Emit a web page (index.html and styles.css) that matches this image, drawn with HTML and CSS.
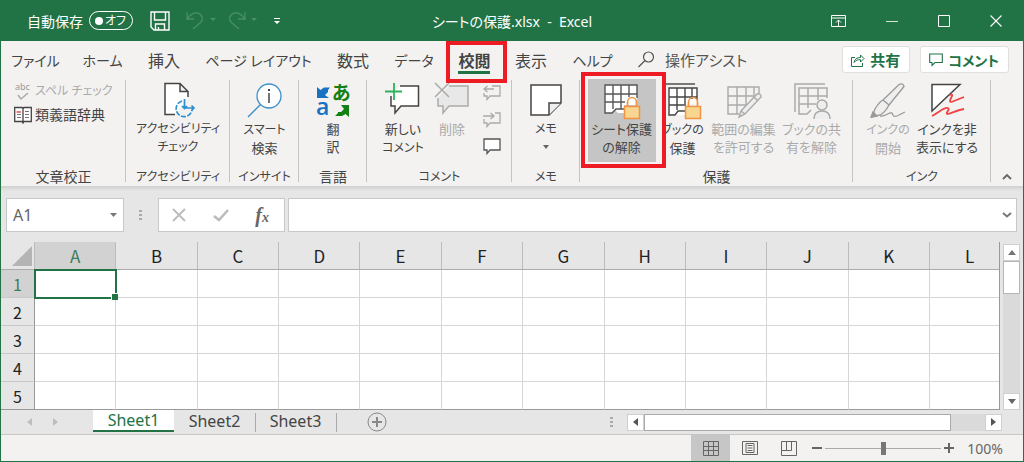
FILE: index.html
```html
<!DOCTYPE html>
<html lang="ja">
<head>
<meta charset="utf-8">
<meta name="viewport" content="width=device-width, initial-scale=1">
<title>シートの保護.xlsx - Excel</title>
<link rel="stylesheet" href="styles.css">
</head>
<body>
<div class="app">
  <header class="titlebar">
    <div class="quick">
      <label for="autosave" class="autosave-label">自動保存</label>
      <span class="switch"><input type="checkbox" id="autosave"><span>オフ</span></span>
      <button class="icon-btn save" aria-label="上書き保存"><svg width="20" height="20" viewBox="0 0 20 20" fill="none" stroke="#fff" stroke-width="1.4"><path d="M1 1h18v18H4l-3-3zM4.500 1v8h11V1M5.500 19v-6h9v6M8.500 19v-3"/></svg></button>
      <button class="icon-btn undo" aria-label="元に戻す" disabled><svg width="29" height="20" viewBox="0 0 29 20" fill="none" stroke="#4a8e6a" stroke-width="1.300"><path d="M1 1v7h7M1.500 7.500C6 1 12 .5 15 4c3 4 1 6-1 8l-7 6"/><path d="M24 7h6l-3 3z" fill="#4a8e6a" stroke="none"/></svg></button>
      <button class="icon-btn redo" aria-label="やり直し" disabled><svg width="29" height="20" viewBox="0 0 29 20" fill="none" stroke="#4a8e6a" stroke-width="1.300"><path d="M17 1v7h-7M16.500 7.500C12 1 6 .5 3 4 0 8 2 10 4 12l7 6"/><path d="M23 7h6l-3 3z" fill="#4a8e6a" stroke="none"/></svg></button>
      <button class="icon-btn custom" aria-label="カスタマイズ"><svg width="6" height="8" viewBox="0 0 6 8" fill="#fff"><path d="M0 1h6v1H0zM0 4h6L3 7z"/></svg></button>
    </div>
    <h1 class="doc-title">シートの保護.xlsx&nbsp; -&nbsp; Excel</h1>
    <div class="window-btns">
      <button class="icon-btn" aria-label="リボンの表示オプション"><svg width="15" height="12" viewBox="0 0 15 12" fill="none" stroke="#fff"><path d="M.5.5h14v11H.5zM.5 3h14M7.500 11V5M5 7.500 7.500 5 10 7.500"/></svg></button>
      <button class="icon-btn" aria-label="最小化"><svg width="12" height="12" viewBox="0 0 12 12" stroke="#d5e5dc"><path d="M0 6.500h12"/></svg></button>
      <button class="icon-btn" aria-label="最大化"><svg width="12" height="12" viewBox="0 0 12 12" fill="none" stroke="#fff"><path d="M.5.5h11v11H.5z"/></svg></button>
      <button class="icon-btn" aria-label="閉じる"><svg width="12" height="12" viewBox="0 0 12 12" stroke="#fff" stroke-width="1.100"><path d="M.5.5l11 11M11.500.5l-11 11"/></svg></button>
    </div>
  </header>

  <div class="tabrow">
    <nav class="tabs">
      <button class="kana">ファイル</button><button class="kana">ホーム</button><button>挿入</button><button class="kana">ページ レイアウト</button><button>数式</button><button class="kana">データ</button><button class="active">校閲<span class="callout tab-callout"></span></button><button>表示</button><button class="kana">ヘルプ</button>
    </nav>
    <button class="assist"><svg width="17" height="17" viewBox="0 0 17 17" fill="none" stroke="#555" stroke-width="1.200"><circle cx="10.500" cy="6" r="5"/><path d="M7 9.500.5 16"/></svg>操作アシスト</button>
    <div class="share">
      <button><svg width="14" height="14" viewBox="0 0 14 14" fill="none" stroke="#217346"><path d="M4 4.500H.5v9h11V10M3 9.500c.5-3.500 3-5 6.500-5V2L13 5.500 9.500 9V6.700C7 6.500 5 7 3 9.500z"/></svg>共有</button>
      <button class="kana"><svg width="14" height="14" viewBox="0 0 14 14" fill="none" stroke="#217346" stroke-width="1.100"><path d="M.7 1h12.600v8.500H6L3 12.500v-3H.7z"/></svg>コメント</button>
    </div>
  </div>

  <div class="ribbon">
    <section class="group proof">
      <div class="tools list">
        <button class="row kana" disabled><svg width="18" height="19" viewBox="0 0 18 19"><text x="1" y="8" font-size="9" fill="#999">abc</text><path d="M4 13l3 4 7-6" fill="none" stroke="#aaa" stroke-width="1.500"/></svg>スペル チェック</button>
        <button class="row"><svg width="18" height="18" viewBox="0 0 18 18" fill="#fff" stroke="#444" stroke-width="1.300"><path d="M.7 1.500H8l1 1 1-1h7.300v14H10l-1 1.500-1-1.500H.7zM9 2v14"/><path d="M11 5.500h4M11 8.500h4M11 11.500h4M3 8.500h4M3 11.500h4" stroke="#777" stroke-width="1"/><path d="M2.500 6h4.500" stroke="#e33"/></svg>類義語辞典</button>
      </div>
      <h2>文章校正</h2>
    </section>
    <section class="group access">
      <div class="tools"><button class="tool kana"><svg width="36" height="36" viewBox="0 0 36 36" fill="none" stroke="#444" stroke-width="1.500"><path d="M15 31.500H5v-31h15l8 8V14M20 .5v8h8" fill="#fff"/><g stroke="#2e8fd0" stroke-width="1.700"><path d="M22 18a8 8 0 1 0 10 9" stroke-dasharray="5 1.500"/><path d="M24.500 16v9H34M31.500 22.500 34 25l-2.500 2.500M22 23l2.500 2.500L27 23"/></g></svg><span>アクセシビリティ<br>チェック</span></button></div>
      <h2 class="kana">アクセシビリティ</h2>
    </section>
    <section class="group insight">
      <div class="tools"><button class="tool"><svg width="36" height="36" viewBox="0 0 36 36" fill="none"><circle cx="22" cy="13" r="12" fill="#fff" stroke="#3d8fc9" stroke-width="1.300"/><path d="M13.500 21.500 1 34" stroke="#3d8fc9" stroke-width="1.500"/><path d="M22 10v10" stroke="#444" stroke-width="1.500"/><path d="M22 6v2" stroke="#444" stroke-width="2"/></svg><span><span class="kana">スマート</span><br>検索</span></button></div>
      <h2 class="kana">インサイト</h2>
    </section>
    <section class="group lang">
      <div class="tools"><button class="tool"><svg width="36" height="36" viewBox="0 0 36 36"><path d="M2 4l3.500 3L9 4.500h6L13 7v2l-3 3 4 3H2z" fill="#1971c2"/><text x="1" y="32" font-size="23" font-weight="600" fill="#1971c2" class="latin">a</text><text x="17" y="17" font-size="19" font-weight="700" fill="#128012">あ</text><path d="M34 22v12l-3.500-3-3.500 2h-7l3-3v-1h3l3-3-3-4z" fill="#128012"/></svg><span>翻<br>訳</span></button></div>
      <h2>言語</h2>
    </section>
    <section class="group comments">
      <div class="tools">
        <button class="tool"><svg width="36" height="36" viewBox="0 0 36 36" fill="none"><path d="M15 3h18.500v20H16l-6 7v-7H6V13" fill="#fff" stroke="#444" stroke-width="1.500"/><path d="M9 0v17M0 8.500h17" stroke="#2eb35c" stroke-width="1.800"/></svg><span>新しい<br><span class="kana">コメント</span></span></button>
        <button class="tool" disabled><svg width="36" height="36" viewBox="0 0 36 36" fill="none" stroke="#aaa" stroke-width="1.500"><path d="M15 3h19v20H15l-6 7v-7H4V15" fill="#e8e8e8"/><path d="M1 0l14 14M15 0 1 14"/></svg><span>削除</span></button>
        <div class="mini">
          <button aria-label="前のコメント" disabled><svg width="18" height="17" viewBox="0 0 18 17" fill="none" stroke="#aaa" stroke-width="1.300"><path d="M9 2h8v10H7l-3 3.500V12H1V9M1 5h10M4.500 2 1 5l3.500 3"/></svg></button>
          <button aria-label="次のコメント" disabled><svg width="18" height="17" viewBox="0 0 18 17" fill="none" stroke="#aaa" stroke-width="1.300"><path d="M12 2h5v10H7l-3 3.500V12H1V8M0 5h11M7.500 2 11 5 7.500 8"/></svg></button>
          <button aria-label="コメントの表示"><svg width="18" height="17" viewBox="0 0 18 17" fill="#fff" stroke="#555" stroke-width="1.300"><path d="M1 1h16v11H7l-3 3.500V12H1z"/></svg></button>
        </div>
      </div>
      <h2 class="kana">コメント</h2>
    </section>
    <section class="group memo">
      <div class="tools"><button class="tool kana"><svg width="36" height="36" viewBox="0 0 36 36" fill="#fff" stroke="#444" stroke-width="1.500"><path d="M3 2h30v18L21 32H3z"/><path d="M33 20H21v12" fill="#eee"/></svg><span>メモ<br><svg width="6" height="4" viewBox="0 0 6 4" fill="#666"><path d="M0 0h6L3 4z"/></svg></span></button></div>
      <h2 class="kana">メモ</h2>
    </section>
    <section class="group protect">
      <div class="tools">
        <button class="tool selected"><svg width="36" height="36" viewBox="0 0 36 36" fill="none" stroke="#555" stroke-width="1.400"><path d="M1 2h32v20H20v8h-6l-3-3-3 3H1z" fill="#fff" stroke="none"/><path d="M33 15V2H1v28h7l4-4h8M1 11h32M1 19h20M9 2v24M17 2v24M25 2v12"/><path d="M23.500 24v-4.500a4.500 5 0 0 1 9 0V24" stroke="#ef9443" stroke-width="1.700"/><path d="M20.500 23.500h15v12h-15z" fill="#f8d690" stroke="#ef9443" stroke-width="1.500"/></svg><span>シート保護<br>の解除</span><i class="callout tool-callout"></i></button>
        <button class="tool slim"><svg width="36" height="36" viewBox="0 0 36 36" fill="none" stroke="#444" stroke-width="1.400"><path d="M0 1h30"/><path d="M4 5h28v16H20v11H4z" fill="#fff" stroke="none"/><path d="M32 17V5H4v27h6l3-4h7M4 14h28M4 22h17M12 5v22M20 5v16M27 5v11"/><path d="M23.500 24v-4.500a4.500 5 0 0 1 9 0V24" stroke="#ef9443" stroke-width="1.700"/><path d="M20.500 23.500h15v12h-15z" fill="#f8d690" stroke="#ef9443" stroke-width="1.500"/></svg><span><span class="kana">ブックの</span><br>保護</span></button>
        <button class="tool" disabled><svg width="36" height="36" viewBox="0 0 36 36" fill="none" stroke="#aaa" stroke-width="1.400"><path d="M33 10V4H2v27h11M2 13h27M2 22h18M11 4v27M20 4v18M28 4v8"/><path d="M15 28 31 11q4-1 4 3L19 31l-6 3zM15 28l4 3M28 14l4 4" fill="#eee"/></svg><span>範囲の編集<br>を許可する</span></button>
        <button class="tool" disabled><svg width="36" height="36" viewBox="0 0 36 36" fill="none" stroke="#aaa" stroke-width="1.500"><path d="M31 1H1v28M33 15V5H5v26h8l4-4M5 13h28M5 21h17M14 5v20M24 5v12"/><circle cx="28" cy="22" r="5" fill="#eee"/><path d="M20 36c0-5 3-8 8-8s8 3 8 8" fill="#eee"/></svg><span>ブックの共<br>有を解除</span></button>
      </div>
      <h2>保護</h2>
    </section>
    <section class="group ink">
      <div class="tools">
        <button class="tool slim" disabled><svg width="36" height="36" viewBox="0 0 36 36" fill="none" stroke="#999" stroke-width="1.300"><path d="M13 17 29 1.500q4-2 5 2L19 22M13 17l6 5c-2 4-5 8-9 10L2 34l3-8q4-7 8-9z" fill="#eee"/><path d="M1 34l6-1-4-4z" fill="#999"/><path d="M10 33c6 1 8-4 12-3 1 3 2 4 5 3l8-4"/></svg><span><span class="kana">インクの</span><br>開始</span></button>
        <button class="tool"><svg width="36" height="36" viewBox="0 0 36 36" fill="none"><path d="M3 1.500h28L3 28z" fill="#fff" stroke="#444" stroke-width="1.500"/><path d="M3 33c6-3 12-9 16-8 3 1-4 6 0 6 4-1 10-4 16-5M20 12c4-1 4 0 2 3-2 4-1 5 3 3l10-4" stroke="#ef4343" stroke-width="1.800"/></svg><span>インクを非<br>表示にする</span></button>
      </div>
      <h2 class="kana">インク</h2>
    </section>
    <button class="collapse" aria-label="リボンを折りたたむ"><svg width="10" height="7" viewBox="0 0 10 7" fill="none" stroke="#666" stroke-width="1.800"><path d="M1 6l4-4 4 4"/></svg></button>
  </div>

  <div class="formula">
    <div class="namebox"><input type="text" value="A1" aria-label="名前ボックス"><button aria-label="名前の一覧"><svg width="7" height="4" viewBox="0 0 7 4" fill="#777"><path d="M0 0h7L3.500 4z"/></svg></button></div>
    <span class="dots"></span>
    <div class="fx">
      <button aria-label="キャンセル"><svg width="14" height="12" viewBox="0 0 14 12" fill="none" stroke="#bbb" stroke-width="1.800"><path d="M1 0l12 12M13 0 1 12"/></svg></button>
      <button aria-label="入力"><svg width="16" height="13" viewBox="0 0 16 13" fill="none" stroke="#bbb" stroke-width="2.500"><path d="M1 7l5 4 9-10"/></svg></button>
      <button class="fn">f<sub>x</sub></button>
    </div>
    <div class="fbar"><input type="text" aria-label="数式バー"><button aria-label="数式バーの展開"><svg width="10" height="6" viewBox="0 0 10 6" fill="none" stroke="#777" stroke-width="2"><path d="M1 1l4 3.500L9 1"/></svg></button></div>
  </div>

  <main class="sheet">
    <table>
      <colgroup><col class="rowcol"><col span="11"><col class="lastcol"></colgroup>
      <thead><tr><th class="corner"><svg width="20" height="20" viewBox="0 0 20 20" fill="#b4b4b4"><path d="M20 0v20H0z"/></svg></th><th class="on">A</th><th>B</th><th>C</th><th>D</th><th>E</th><th>F</th><th>G</th><th>H</th><th>I</th><th>J</th><th>K</th><th class="last">L</th></tr></thead>
      <tbody>
        <tr><th class="on">1</th><td class="cursor"></td><td></td><td></td><td></td><td></td><td></td><td></td><td></td><td></td><td></td><td></td><td></td></tr>
        <tr><th>2</th><td></td><td></td><td></td><td></td><td></td><td></td><td></td><td></td><td></td><td></td><td></td><td></td></tr>
        <tr><th>3</th><td></td><td></td><td></td><td></td><td></td><td></td><td></td><td></td><td></td><td></td><td></td><td></td></tr>
        <tr><th>4</th><td></td><td></td><td></td><td></td><td></td><td></td><td></td><td></td><td></td><td></td><td></td><td></td></tr>
        <tr><th>5</th><td></td><td></td><td></td><td></td><td></td><td></td><td></td><td></td><td></td><td></td><td></td><td></td></tr>
      </tbody>
    </table>
    <div class="vscroll">
      <button aria-label="上へ"><svg width="8" height="5" viewBox="0 0 8 5" fill="#777"><path d="M0 5h8L4 0z"/></svg></button>
      <span class="thumb"></span><span class="track"></span>
      <button aria-label="下へ"><svg width="8" height="5" viewBox="0 0 8 5" fill="#666"><path d="M0 0h8L4 5z"/></svg></button>
    </div>
  </main>

  <div class="sheetbar">
    <div class="sheetnav">
      <button aria-label="前のシート"><svg width="5" height="8" viewBox="0 0 5 8" fill="#bdbdbd"><path d="M5 0v8L0 4z"/></svg></button>
      <button aria-label="次のシート"><svg width="5" height="8" viewBox="0 0 5 8" fill="#bdbdbd"><path d="M0 0v8l5-4z"/></svg></button>
    </div>
    <div class="sheets"><button class="current">Sheet1</button><button>Sheet2</button><button>Sheet3</button></div>
    <button class="add" aria-label="新しいシート"><svg width="20" height="20" viewBox="0 0 20 20" fill="none" stroke="#888"><circle cx="10" cy="10" r="9"/><path d="M10 5v10M5 10h10" stroke-width="2"/></svg></button>
    <span class="dots"></span>
    <div class="hscroll">
      <button aria-label="左へ"><svg width="5" height="8" viewBox="0 0 5 8" fill="#555"><path d="M5 0v8L0 4z"/></svg></button>
      <span class="thumb"></span><span class="track"></span>
      <button aria-label="右へ"><svg width="5" height="8" viewBox="0 0 5 8" fill="#555"><path d="M0 0v8l5-4z"/></svg></button>
    </div>
  </div>

  <footer class="status">
    <button class="view chosen" aria-label="標準"><svg width="16" height="16" viewBox="0 0 16 16" fill="none" stroke="#666"><path d="M.5 1.500h15v14H.5zM.5 6.500h15M.5 10.500h15M5.500 1v14M10.500 1v14"/></svg></button>
    <button class="view" aria-label="ページ レイアウト"><svg width="16" height="16" viewBox="0 0 16 16" fill="none" stroke="#666"><path d="M.5 1.500h15v13H.5zM4 3.500h8v9H4zM5.500 5.500h5M5.500 8h5M5.500 10.500h5"/></svg></button>
    <button class="view" aria-label="改ページ プレビュー"><svg width="16" height="16" viewBox="0 0 16 16" fill="none" stroke="#666"><path d="M.5 1.500h15v14H.5zM.5 10.500h10v-9M5.500 1.500v9"/></svg></button>
    <div class="zoom-group">
      <button aria-label="縮小"><svg width="10" height="10" viewBox="0 0 10 10" stroke="#666" stroke-width="2"><path d="M0 5h10"/></svg></button>
      <input class="zoom" type="range" min="0" max="100" value="50" aria-label="ズーム">
      <button aria-label="拡大"><svg width="10" height="10" viewBox="0 0 10 10" stroke="#666" stroke-width="2"><path d="M0 5h10M5 0v10"/></svg></button>
    </div>
    <span class="percent">100%</span>
  </footer>
</div>
</body>
</html>
```

FILE: styles.css
```css
* { box-sizing: border-box; }
body {
  margin: 0;
  font-family: "Noto Sans", "Noto Sans CJK JP", sans-serif;
  font-feature-settings: "palt";
  font-size: 14px;
  color: #444;
}
button, input { font: inherit; font-feature-settings: inherit; color: inherit; }
button { border: 0; padding: 0; background: none; white-space: nowrap; }
input { border: 0; padding: 0; margin: 0; outline: 0; background: none; min-width: 0; }
svg { display: block; flex: none; overflow: visible; }
h1, h2 { margin: 0; font-weight: 400; }
.app {
  display: flex;
  flex-direction: column;
  min-height: 100vh;
  background: #f3f2f1;
  border: solid #217346;
  border-width: 0 1px 1px;
}

/* title bar */
.titlebar {
  display: grid;
  grid-template-columns: 1fr auto 1fr;
  align-items: center;
  height: 41px;
  background: #217346;
  color: #fff;
}
.quick { display: flex; align-items: center; padding-left: 26px; white-space: nowrap; }
.switch {
  display: flex;
  align-items: center;
  justify-content: space-between;
  width: 44px;
  height: 19px;
  margin: 0 17px 0 6px;
  padding: 0 6px 0 5px;
  border: 1px solid #fff;
  border-radius: 10px;
  font-size: 12px;
  line-height: 16px;
}
.switch input { appearance: none; width: 8px; height: 8px; border-radius: 50%; background: #fff; }
.undo { margin-left: 16px; }
.redo { margin-left: 13px; }
.custom { margin-left: 17px; }
.doc-title { font-size: 14px; white-space: nowrap; }
.window-btns { display: flex; justify-content: flex-end; gap: 40px; padding-right: 21px; }

/* tab row */
.tabrow { display: flex; align-items: center; height: 37px; }
.tabs {
  display: grid;
  grid-template-columns: 69px 65px 58px 131px 58px 64px 57px 56px 67px;
  align-self: stretch;
  font-size: 16px;
}
.tabs .kana, .share .kana { font-size: 14px; }
.tabs button { position: relative; }
.tabs .active { font-weight: 700; }
.tabs .active::after {
  content: "";
  position: absolute;
  left: 12px;
  right: 13px;
  bottom: 4px;
  height: 3px;
  background: #217346;
}
.callout { position: absolute; z-index: 2; border: 4px solid #ed1c24; pointer-events: none; }
.tab-callout { inset: 0 -4px -5px 0; }
.tool-callout { inset: -7px -10px -6px -7px; }
.assist { display: flex; align-items: center; gap: 10px; padding-left: 12px; font-size: 15px; color: #555; }
.share { display: flex; gap: 10px; margin-left: auto; padding-right: 14px; }
.share button {
  display: flex;
  align-items: center;
  gap: 5px;
  height: 27px;
  padding: 0 9px 0 8px;
  background: #fff;
  border: 1px solid #e1dfdd;
  border-radius: 3px;
  color: #217346;
  font-size: 15px;
  font-weight: 700;
}

/* ribbon */
.ribbon { display: flex; height: 108px; line-height: 18px; }
.group {
  position: relative;
  display: flex;
  flex-direction: column;
  justify-content: space-between;
  flex: 1 1 0;
  min-width: 0;
}
.group::after {
  content: "";
  position: absolute;
  top: 2px;
  right: 0;
  bottom: 4px;
  width: 1px;
  background: #c6c4c2;
}
.group h2 { font-size: 14px; text-align: center; white-space: nowrap; }
.proof { flex-grow: 125; }
.access { flex-grow: 104; }
.insight { flex-grow: 69; }
.lang { flex-grow: 68; }
.comments { flex-grow: 145; }
.memo { flex-grow: 68; }
.protect { flex-grow: 273; }
.ink { flex-grow: 138; }
.collapse { display: flex; align-items: flex-end; justify-content: center; flex: 32 1 0; padding-bottom: 6px; }
.tools { display: flex; justify-content: center; padding-top: 1px; }
.tools.list { flex-direction: column; justify-content: flex-start; align-items: flex-start; gap: 4px; padding: 3px 0 0 13px; }
.row { display: flex; align-items: center; gap: 3px; height: 20px; font-size: 14px; }
.tool {
  position: relative;
  display: flex;
  flex-direction: column;
  align-items: center;
  gap: 1px;
  min-width: 49px;
  height: 83px;
  padding: 4px 3px 0;
  font-size: 13px;
}
.tool span svg { margin: 7px auto 0; }
.tool:disabled, .row:disabled { color: #aaa; }
.group .kana { font-size: 12px; }
.protect .tool { width: 68px; }
.protect .slim { width: 54px; }
.ink .tool { width: 68px; }
.ink .slim { width: 50px; }
.selected { background: #c5c5c5; }
.latin { font-family: "Open Sans", sans-serif; }
.mini { display: flex; flex-direction: column; gap: 10px; padding: 5px 0 0 6px; }

/* formula bar */
.formula {
  display: flex;
  align-items: center;
  height: 56px;
  padding: 2px 6px 0 5px;
  background: linear-gradient(#cfcfcf, #e6e6e6 5px);
}
.namebox, .fx, .fbar { display: flex; align-items: center; height: 34px; background: #fff; border: 1px solid #c8c8c8; }
.namebox { width: 118px; padding: 0 6px; font-size: 16px; }
.namebox input { flex: 1; width: 0; color: #666; }
.dots { flex: none; width: 3px; height: 11px; background: repeating-linear-gradient(#aaa 0 2px, transparent 2px 4px); }
.formula .dots { margin: 0 16px 0 15px; }
.fx { width: 127px; justify-content: space-between; padding: 0 15px 0 13px; }
.fn { font-family: "Liberation Serif", serif; font-size: 20px; line-height: 20px; font-style: italic; font-weight: 700; color: #666; }
.fn sub { font-size: 14px; line-height: 1; vertical-align: baseline; }
.fbar { flex: 1; margin-left: 3px; padding-right: 4px; }
.fbar input { flex: 1; }

/* cells */
.sheet { display: flex; background: #e6e6e6; }
table {
  flex: 1;
  width: 100%;
  table-layout: fixed;
  border-collapse: separate;
  border-spacing: 0;
  border-right: 1px solid #999;
  font-family: "Noto Sans CJK JP", sans-serif;
}
.rowcol { width: 34px; }
.lastcol { width: 69px; }
th, td { height: 28px; padding: 0; }
th {
  background: #e6e6e6;
  font-size: 17px;
  line-height: 20px;
  font-weight: 400;
  color: #222;
  border-right: 1px solid #bcbcbc;
  border-bottom: 1px solid #ababab;
}
tbody th { border-bottom-color: #c8c8c8; border-right-color: #999; font-size: 16px; }
.corner svg { margin-left: 11px; }
th.on { background: #d2d2d2; color: #3d7d5c; }
.last { text-align: left; padding-left: 35px; border-right: 0; }
td { background: #fff; border: solid #d6d6d6; border-width: 0 1px 1px 0; }
tr:last-child td, tbody tr:last-child th { border-bottom-color: #999; }
td:last-child { border-right: 0; }
.cursor { position: relative; outline: 2px solid #217346; outline-offset: -1px; }
.cursor::after {
  content: "";
  position: absolute;
  right: -3px;
  bottom: -3px;
  width: 6px;
  height: 6px;
  background: #217346;
  border: solid #fff;
  border-width: 1px 0 0 1px;
}
.vscroll { display: flex; flex-direction: column; flex: 0 0 17px; margin: 2px 3px 0 3px; }
.vscroll button, .hscroll button { display: flex; align-items: center; justify-content: center; flex: 0 0 17px; background: #fff; border: 1px solid #cfcfcf; }
.vscroll .thumb { height: 33px; background: #fff; border: 1px solid #b5b5b5; }
.track { flex: 1; background: #dadada; }

/* sheet tabs */
.sheetbar { display: flex; align-items: center; height: 25px; background: #e6e6e6; border-bottom: 1px solid #c6c6c6; }
.sheetnav { display: flex; gap: 21px; width: 92px; padding-left: 26px; }
.sheets { display: flex; align-self: stretch; padding-bottom: 2px; }
.sheets button { position: relative; width: 81px; font-size: 16px; line-height: 20px; }
.sheets button:not(.current)::after { content: ""; position: absolute; right: -1px; top: 3px; bottom: 0; width: 1px; background: #aaa; }
.sheets .current { background: #fff; color: #217346; border-bottom: 2px solid #217346; }
.add { margin-left: 31px; }
.sheetbar .dots { margin-left: auto; }
.hscroll { display: flex; flex: 0 0 375px; height: 17px; margin: 0 21px 0 14px; }
.hscroll .thumb { flex: 0 1 307px; background: #fff; border: 1px solid #aaa; }

/* status bar */
.status { display: flex; align-items: center; justify-content: flex-end; height: 26px; padding-right: 20px; color: #666; }
.view { display: flex; align-items: center; justify-content: center; align-self: stretch; width: 39px; }
.chosen { background: #c6c6c6; }
.zoom-group { display: flex; align-items: center; gap: 3px; margin: 0 13px 0 4px; }
.zoom { appearance: none; width: 116px; height: 13px; }
.zoom::-webkit-slider-runnable-track { height: 13px; background: linear-gradient(#aaa, #aaa) center / 100% 1px no-repeat; }
.zoom::-webkit-slider-thumb { appearance: none; width: 5px; height: 13px; background: #777; }
```
